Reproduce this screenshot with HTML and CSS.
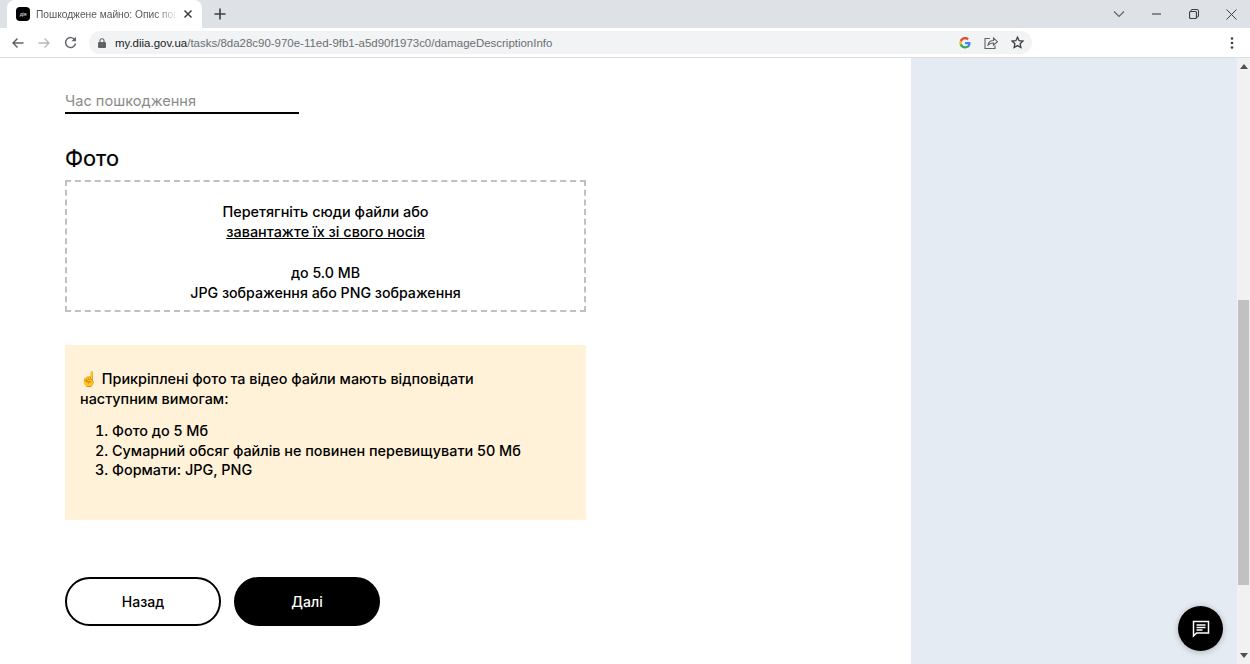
FILE: index.html
```html
<!DOCTYPE html>
<html lang="uk">
<head>
<meta charset="UTF-8">
<meta name="viewport" content="width=device-width, initial-scale=1.0">
<title>Пошкоджене майно: Опис пошкодження</title>
<link rel="stylesheet" href="styles.css">
</head>
<body>
<div class="browser">
    <div class="tabstrip">
        <div class="tab">
            <span class="favicon">дія</span>
            <span class="tab-title">Пошкоджене майно: Опис пошкодження</span>
            <svg class="tab-close" width="10" height="10" viewBox="0 0 10 10"><path d="M1.500 1.500l7 7M8.500 1.500l-7 7" stroke="#3c4043" stroke-width="1.500"/></svg>
        </div>
        <svg class="new-tab" width="12" height="12" viewBox="0 0 12 12"><path d="M6 .5v11M.5 6h11" stroke="#3c4043" stroke-width="1.600"/></svg>
        <div class="window-controls">
            <svg width="12" height="8" viewBox="0 0 12 8"><path d="M1 1.500l5 5 5-5" fill="none" stroke="#5f6368" stroke-width="1.100"/></svg>
            <svg width="10" height="10" viewBox="0 0 10 10"><path d="M0 5h9" stroke="#5f6368" stroke-width="1.400"/></svg>
            <svg width="10" height="10" viewBox="0 0 10 10"><path d="M2 2.500V1.500q0-1 1-1h5q1.500 0 1.500 1.500v5q0 1-1 1h-1" fill="none" stroke="#3c4043" stroke-width="1"/><rect x=".5" y="2.500" width="7" height="7" rx="1.200" fill="none" stroke="#3c4043" stroke-width="1.200"/></svg>
            <svg width="11" height="11" viewBox="0 0 11 11"><path d="M.5.5l10 10M10.500.5l-10 10" stroke="#3c4043" stroke-width="1"/></svg>
        </div>
    </div>
    <div class="toolbar">
        <svg width="12" height="12" viewBox="0 0 12 12"><path d="M11.500 6H1M5.500 1.500L1 6l4.500 4.500" fill="none" stroke="#5f6368" stroke-width="1.500"/></svg>
        <svg class="nav-off" width="12" height="12" viewBox="0 0 12 12"><path d="M.5 6H11M6.500 1.500L11 6l-4.500 4.500" fill="none" stroke="#b4b7bb" stroke-width="1.300"/></svg>
        <svg class="nav-reload" width="13" height="13" viewBox="0 0 13 13"><path d="M11 4.200A5 5 0 1 0 11.500 7.500" fill="none" stroke="#5f6368" stroke-width="1.400"/><path d="M12 .8v4.500H7.500z" fill="#5f6368"/></svg>
        <div class="omnibox">
            <svg class="lock" width="8" height="10" viewBox="0 0 8 10"><path d="M2 4V2.800a2 2 0 0 1 4 0V4" fill="none" stroke="#5f6368" stroke-width="1.100"/><rect y="4" width="8" height="6" rx="1" fill="#5f6368"/></svg>
            <span class="url"><b>my.diia.gov.ua</b>/tasks/8da28c90-970e-11ed-9fb1-a5d90f1973c0/damageDescriptionInfo</span>
            <svg class="google" width="12" height="12" viewBox="0 0 48 48">
                <path fill="#4285f4" d="M46 24.500c0-1.600-.1-3.100-.4-4.500H24v8.600h12.400c-.5 2.900-2.100 5.300-4.600 6.900v5.700h7.400c4.300-4 6.800-9.800 6.800-16.700z"/>
                <path fill="#34a853" d="M24 46c6.200 0 11.400-2 15.200-5.600l-7.400-5.700c-2 1.400-4.700 2.200-7.800 2.200-6 0-11-4-12.800-9.500H3.600v5.900C7.300 40.700 15.100 46 24 46z"/>
                <path fill="#fbbc05" d="M11.200 27.400c-.5-1.400-.7-2.900-.7-4.400s.3-3 .7-4.400v-5.900H3.600C2 15.800 1 19.300 1 23s1 7.200 2.600 10.300z"/>
                <path fill="#ea4335" d="M24 9.100c3.400 0 6.400 1.200 8.800 3.400l6.600-6.600C35.400 2.200 30.200 0 24 0 15.100 0 7.300 5.300 3.600 12.700l7.600 5.900C13 13.100 18 9.100 24 9.100z"/>
            </svg>
            <svg class="share" width="14" height="13" viewBox="0 0 14 13"><path d="M6 2.500H1v10h10V9.500" fill="none" stroke="#5f6368" stroke-width="1.100"/><path d="M4 9c.5-3 2.500-4.500 5.500-4.500V2L13.500 5.700 9.500 9V7C7.500 7 5.500 7.500 4 9z" fill="none" stroke="#5f6368" stroke-width="1.100"/></svg>
            <svg class="star" width="13" height="13" viewBox="0 0 13 13"><path d="M6.500 1.200l1.600 3.500 3.800.4-2.800 2.600.8 3.800-3.400-1.900-3.400 1.900.8-3.800L1.100 5.100l3.800-.4z" fill="none" stroke="#3c4043" stroke-width="1.300"/></svg>
        </div>
        <svg class="menu-dots" width="4" height="12" viewBox="0 0 4 12"><circle cx="2" cy="1.500" r="1.300" fill="#3c4043"/><circle cx="2" cy="6" r="1.300" fill="#3c4043"/><circle cx="2" cy="10.500" r="1.300" fill="#3c4043"/></svg>
    </div>
    <div class="viewport">
        <main class="content">
            <div class="time-field">Час пошкодження</div>
            <h2 class="section-title">Фото</h2>
            <div class="dropzone">
                <p class="drop-hint">Перетягніть сюди файли або<br><a href="#">завантажте їх зі свого носія</a></p>
                <p>до 5.0 MB<br>JPG зображення або PNG зображення</p>
            </div>
            <div class="notice">
                <p><span class="emoji">☝</span> Прикріплені фото та відео файли мають відповідати наступним вимогам:</p>
                <ol>
                    <li>Фото до 5 Мб</li>
                    <li>Сумарний обсяг файлів не повинен перевищувати 50 Мб</li>
                    <li>Формати: JPG, PNG</li>
                </ol>
            </div>
            <div class="actions">
                <button class="btn btn-back">Назад</button>
                <button class="btn btn-next">Далі</button>
            </div>
        </main>
        <aside class="sidebar"></aside>
        <div class="scrollbar">
            <svg width="8" height="5" viewBox="0 0 8 5"><path d="M4 0l4 5H0z" fill="#505050"/></svg>
            <div class="scroll-track"><div class="scroll-thumb"></div></div>
            <svg width="8" height="5" viewBox="0 0 8 5"><path d="M0 0h8L4 5z" fill="#505050"/></svg>
        </div>
        <button class="chat-btn">
            <svg width="18" height="18" viewBox="0 0 18 18"><path d="M1.500 1.500h15v11.500H4.500l-3 3z" fill="none" stroke="#fff" stroke-width="1.500"/><path d="M4.500 5h9M4.500 7.500h9M4.500 10h6" stroke="#fff" stroke-width="1.300"/></svg>
        </button>
    </div>
</div>
</body>
</html>
```

FILE: styles.css
```css
* {
    box-sizing: border-box;
}
html, body {
    height: 100%;
}
body {
    margin: 0;
    overflow: hidden;
    font-family: Inter, "Noto Sans", Arial, sans-serif;
    color: #000;
    background-color: #fff;
}
.browser {
    display: flex;
    flex-direction: column;
    height: 664px;
}
.tabstrip {
    display: flex;
    align-items: flex-end;
    height: 28px;
    padding-left: 7px;
    background-color: #dee1e6;
}
.tab {
    display: flex;
    align-items: center;
    width: 195px;
    height: 28px;
    padding: 0 9px 0 9px;
    background-color: #fff;
    border-radius: 8px 8px 0 0;
    font-family: "Liberation Sans", Arial, sans-serif;
    font-size: 10.200px;
    color: #54585c;
}
.favicon {
    flex: none;
    width: 14px;
    height: 14px;
    margin-right: 6px;
    border-radius: 4px;
    background-color: #000;
    color: #fff;
    font-size: 5px;
    line-height: 14px;
    text-align: center;
}
.tab-title {
    flex: 1;
    overflow: hidden;
    white-space: nowrap;
    -webkit-mask-image: linear-gradient(to right, #000 85%, transparent);
    mask-image: linear-gradient(to right, #000 85%, transparent);
}
.tab-close {
    flex: none;
    margin-left: 5px;
}
.new-tab {
    align-self: center;
    margin-left: 12px;
}
.window-controls {
    display: flex;
    align-items: center;
    gap: 27px;
    align-self: center;
    margin-left: auto;
    padding-right: 13px;
}
.toolbar {
    display: flex;
    align-items: center;
    height: 30px;
    padding: 0 16px 0 12px;
    background-color: #fff;
    border-bottom: 1px solid #dadce0;
}
.nav-off {
    margin-left: 14px;
}
.nav-reload {
    margin-left: 14px;
}
.omnibox {
    display: flex;
    align-items: center;
    width: 943px;
    height: 23px;
    margin-left: 12px;
    padding: 0 8px 0 9px;
    border-radius: 12px;
    background-color: #f1f3f4;
}
.lock {
    flex: none;
}
.url {
    flex: 1;
    margin-left: 9px;
    font-family: "Liberation Sans", Arial, sans-serif;
    font-size: 11.480px;
    color: #6b6f73;
    white-space: nowrap;
}
.url b {
    font-weight: normal;
    color: #202124;
}
.share {
    margin-left: 13px;
}
.star {
    margin-left: 13px;
}
.menu-dots {
    margin-left: auto;
}
.viewport {
    position: relative;
    display: flex;
    flex: 1;
    min-height: 0;
}
.content {
    width: 911px;
    padding: 35px 0 0 65px;
}
.time-field {
    width: 234px;
    height: 21px;
    border-bottom: 2px solid #000;
    font-size: 14.600px;
    line-height: 17px;
    color: #8b8b8b;
}
.section-title {
    margin: 32px 0 0;
    font-size: 21.800px;
    font-weight: 400;
    line-height: 24px;
    -webkit-text-stroke: 0.2px #000;
}
.dropzone {
    width: 521px;
    height: 132px;
    margin-top: 10px;
    padding-top: 20px;
    border: 2px dashed #c0c0c0;
    font-size: 14.200px;
    font-weight: 500;
    line-height: 20px;
    text-align: center;
}
.dropzone p {
    margin: 0 0 21px;
}
.dropzone .drop-hint {
    font-size: 14.450px;
}
.dropzone a {
    color: #000;
}
.notice {
    width: 521px;
    height: 175px;
    margin-top: 33px;
    padding: 24px 40px 0 15px;
    background-color: #fff2d9;
    font-size: 14.400px;
    font-weight: 500;
    line-height: 19.500px;
}
.notice p {
    margin: 0 0 13px;
}
.notice ol {
    margin: 0;
    padding-left: 32px;
}
.emoji {
    color: #f5b83d;
}
.actions {
    display: flex;
    gap: 13px;
    margin-top: 57px;
}
.btn {
    height: 49px;
    border-radius: 25px;
    border: 2px solid #000;
    font-family: inherit;
    font-size: 14px;
    font-weight: 500;
    cursor: pointer;
}
.btn-back {
    width: 156px;
    background-color: #fff;
    color: #000;
}
.btn-next {
    width: 146px;
    background-color: #000;
    color: #fff;
}
.sidebar {
    width: 326px;
    background-color: #e5ebf3;
}
.scrollbar {
    display: flex;
    flex-direction: column;
    align-items: center;
    justify-content: space-between;
    flex: 1;
    padding: 6px 0;
    background-color: #f1f1f1;
}
.scroll-track {
    flex: 1;
    width: 100%;
    padding: 231px 1px 68px;
}
.scroll-thumb {
    height: 100%;
    background-color: #c1c1c1;
}
.chat-btn {
    position: absolute;
    right: 27px;
    bottom: 13px;
    display: flex;
    align-items: center;
    justify-content: center;
    width: 45px;
    height: 45px;
    padding: 0;
    border: none;
    border-radius: 50%;
    background-color: #000;
    box-shadow: 0 1px 6px rgba(0, 0, 0, 0.25);
}
```
